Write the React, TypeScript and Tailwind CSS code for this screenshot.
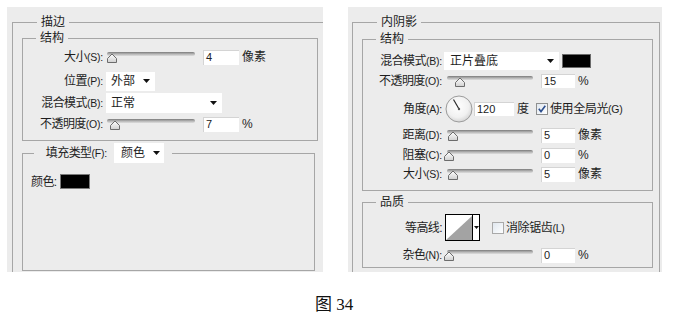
import React from "react";

const FONT = "font-['Liberation_Sans','Noto_Sans_CJK_SC',sans-serif]";

function Arrow() {
  return (
    <svg width="7" height="4" className="block shrink-0">
      <path d="M0 0 H7 L3.5 4 Z" fill="#111" />
    </svg>
  );
}

function Slider({ w, track, thumb }: { w: number; track: number; thumb: number }) {
  return (
    <svg width={w} height={12} className="block shrink-0">
      <defs>
        <linearGradient id="trk" x1="0" y1="0" x2="0" y2="1">
          <stop offset="0" stopColor="#7a7a7a" />
          <stop offset="0.5" stopColor="#b4b4b4" />
          <stop offset="1" stopColor="#dedede" />
        </linearGradient>
        <linearGradient id="thb" x1="0" y1="0" x2="0" y2="1">
          <stop offset="0" stopColor="#ffffff" />
          <stop offset="1" stopColor="#d0d0d0" />
        </linearGradient>
      </defs>
      <rect x={track} y={1} width={w - track} height={4} rx={2} fill="url(#trk)" />
      <path
        d={`M${thumb + 0.5} 11.5 V7.5 L${thumb + 5} 3 L${thumb + 9.5} 7.5 V11.5 Z`}
        fill="url(#thb)"
        stroke="#6c6c6c"
        strokeWidth="1"
        strokeLinejoin="round"
      />
    </svg>
  );
}

function Input({ v, w, h = 15 }: { v: string; w: number; h?: number }) {
  return (
    <div
      className="bg-white border-t border-l border-[#d4d4d4] pl-[2px] flex items-center text-[11px] text-[#222] shrink-0"
      style={{ width: w, height: h }}
    >
      {v}
    </div>
  );
}

function Select({ v, w, h, pl = 5, pr = 5 }: { v: string; w: number; h: number; pl?: number; pr?: number }) {
  return (
    <div
      className="bg-white flex items-center justify-between text-[12px] text-[#1e1e1e] shrink-0"
      style={{ width: w, height: h, paddingLeft: pl, paddingRight: pr }}
    >
      <span>{v}</span>
      <Arrow />
    </div>
  );
}

function Check({ checked }: { checked: boolean }) {
  return (
    <svg width="12" height="12" className="block shrink-0">
      <defs>
        <linearGradient id="cbg" x1="0" y1="0" x2="1" y2="1">
          <stop offset="0" stopColor="#dfe6ee" />
          <stop offset="1" stopColor="#ffffff" />
        </linearGradient>
      </defs>
      <rect x="0.5" y="0.5" width="11" height="11" fill="url(#cbg)" stroke={checked ? "#8e8f8f" : "#a9a9a9"} />
      {checked && <path d="M2.8 5.8 L5 8.6 L9.3 2.8" fill="none" stroke="#2d4f8e" strokeWidth="1.6" />}
    </svg>
  );
}

function Dial() {
  return (
    <svg width="28" height="28" className="block shrink-0">
      <defs>
        <radialGradient id="dial" cx="0.45" cy="0.4" r="0.6">
          <stop offset="0" stopColor="#ffffff" />
          <stop offset="0.7" stopColor="#f1f1f1" />
          <stop offset="1" stopColor="#d6d6d6" />
        </radialGradient>
      </defs>
      <circle cx="14" cy="14" r="13" fill="url(#dial)" stroke="#9c9c9c" />
      <line x1="14" y1="14" x2="8.5" y2="4.5" stroke="#2a2a2a" strokeWidth="1.2" />
      <circle cx="14" cy="14" r="1.2" fill="#555" />
    </svg>
  );
}

function Contour() {
  return (
    <div className="flex h-[27px] w-[35px] border border-black bg-white shrink-0">
      <svg width="27" height="25" className="block">
        <path d="M0 25 L27 0 L27 25 Z" fill="#a3a3a3" />
      </svg>
      <div className="w-[7px] border-l border-black flex items-center justify-center">
        <svg width="5" height="3" className="block">
          <path d="M0 0 H5 L2.5 3 Z" fill="#111" />
        </svg>
      </div>
    </div>
  );
}

function Txt({ t }: { t: string }) {
  const m = t.match(/^(.*?)(\(.*)$/);
  if (!m) return <>{t}</>;
  return (
    <>
      {m[1]}
      <span className="text-[10.5px] tracking-[-0.2px]">{m[2]}</span>
    </>
  );
}

function Label({ t, w }: { t: string; w: number }) {
  return (
    <div className="text-right text-[12px] text-[#1e1e1e] shrink-0 whitespace-nowrap tracking-[-0.6px]" style={{ width: w }}>
      <Txt t={t} />
    </div>
  );
}

function Legend({ children, ml }: { children: React.ReactNode; ml: number }) {
  return (
    <legend className="px-1 text-[12px] leading-[16px] text-[#1e1e1e]" style={{ marginLeft: ml }}>
      {children}
    </legend>
  );
}

function Unit({ children }: { children: React.ReactNode }) {
  return <span className="ml-[3px] text-[12px] text-[#1e1e1e]">{children}</span>;
}

export default function App() {
  return (
    <div className={`w-[684px] h-[320px] bg-white ${FONT}`}>
      <div className="flex gap-[25px] pl-[7px] pt-[7px]">
        {/* Left panel: 描边 */}
        <div className="w-[316px] h-[265px] bg-[#ececec] pl-[5px] pt-[7px] overflow-hidden">
          <fieldset className="h-[258px] border-t border-l border-[#a6a6a6] pl-[9px]">
            <Legend ml={15}>描边</Legend>
            <fieldset className="w-[296px] border border-[#a6a6a6] pb-[6px]">
              <Legend ml={13}>结构</Legend>
              <div className="flex items-center h-[20px] mt-[1px]">
                <Label w={80} t="大小(S):" />
                <div className="ml-[2px]"><Slider w={90} track={2} thumb={2} /></div>
                <div className="ml-[8px]"><Input v="4" w={36} /></div>
                <Unit>像素</Unit>
              </div>
              <div className="flex items-center h-[20px] mt-[4px]">
                <Label w={80} t="位置(P):" />
                <div className="ml-[3px]"><Select v="外部" w={49} h={19} /></div>
              </div>
              <div className="flex items-center h-[20px] mt-[2px]">
                <Label w={80} t="混合模式(B):" />
                <div className="ml-[3px]"><Select v="正常" w={116} h={20} /></div>
              </div>
              <div className="flex items-center h-[20px] mt-[1px]">
                <Label w={80} t="不透明度(O):" />
                <div className="ml-[2px]"><Slider w={90} track={2} thumb={5} /></div>
                <div className="ml-[8px]"><Input v="7" w={36} /></div>
                <Unit>%</Unit>
              </div>
            </fieldset>
            <fieldset className="w-[293px] h-[128px] mt-[2px] border border-[#a6a6a6]">
              <legend className="flex items-center pr-[8px]" style={{ marginLeft: 11 }}>
                <Label w={73} t="填充类型(F):" />
                <div className="ml-[7px]"><Select v="颜色" w={50} h={20} pl={7} pr={4} /></div>
              </legend>
              <div className="flex items-center h-[15px] mt-[11px] pl-[8px]">
                <span className="text-[12px] text-[#1e1e1e] tracking-[-0.6px]">颜色:</span>
                <div className="ml-[3px] w-[30px] h-[15px] bg-black border border-[#7a7a7a]" />
              </div>
            </fieldset>
          </fieldset>
        </div>

        {/* Right panel: 内阴影 */}
        <div className="w-[314px] h-[265px] bg-[#ececec] pl-[4px] pt-[7px] overflow-hidden">
          <fieldset className="w-[308px] h-[258px] border-t border-l border-r border-[#a6a6a6] pl-[9px]">
            <Legend ml={15}>内阴影</Legend>
            <fieldset className="w-[291px] mt-[1px] border border-[#a6a6a6] pb-[8px]">
              <Legend ml={13}>结构</Legend>
              <div className="flex items-center h-[18px] mt-[5px]">
                <Label w={79} t="混合模式(B):" />
                <div className="ml-[2px]"><Select v="正片叠底" w={115} h={18} pl={6} pr={5} /></div>
                <div className="ml-[3px] w-[29px] h-[14px] bg-black border border-[#6a6a6a]" />
              </div>
              <div className="flex items-center h-[16px] mt-[3px]">
                <Label w={79} t="不透明度(O):" />
                <div className="ml-[2px]"><Slider w={89} track={3} thumb={11} /></div>
                <div className="ml-[8px]"><Input v="15" w={34} h={14} /></div>
                <Unit>%</Unit>
              </div>
              <div className="flex items-center h-[28px] mt-[6px]">
                <Label w={79} t="角度(A):" />
                <div className="ml-[3px]"><Dial /></div>
                <div className="ml-[1px]"><Input v="120" w={40} h={14} /></div>
                <Unit>度</Unit>
                <div className="ml-[7px]"><Check checked /></div>
                <span className="ml-[2px] text-[12px] text-[#1e1e1e] tracking-[-0.4px]"><Txt t="使用全局光(G)" /></span>
              </div>
              <div className="flex items-center h-[16px] mt-[4px]">
                <Label w={79} t="距离(D):" />
                <div className="ml-[2px]"><Slider w={89} track={3} thumb={4} /></div>
                <div className="ml-[8px]"><Input v="5" w={34} h={15} /></div>
                <Unit>像素</Unit>
              </div>
              <div className="flex items-center h-[16px] mt-[4px]">
                <Label w={79} t="阻塞(C):" />
                <div className="ml-[2px]"><Slider w={89} track={3} thumb={0} /></div>
                <div className="ml-[8px]"><Input v="0" w={34} h={15} /></div>
                <Unit>%</Unit>
              </div>
              <div className="flex items-center h-[16px] mt-[3px]">
                <Label w={79} t="大小(S):" />
                <div className="ml-[2px]"><Slider w={89} track={3} thumb={4} /></div>
                <div className="ml-[8px]"><Input v="5" w={34} h={15} /></div>
                <Unit>像素</Unit>
              </div>
            </fieldset>
            <fieldset className="w-[291px] mt-[3px] border border-[#a6a6a6] pb-[4px]">
              <Legend ml={13}>品质</Legend>
              <div className="flex items-center h-[27px] mt-[4px]">
                <Label w={79} t="等高线:" />
                <div className="ml-[3px]"><Contour /></div>
                <div className="ml-[12px]"><Check checked={false} /></div>
                <span className="ml-[2px] text-[12px] text-[#1e1e1e] tracking-[-0.4px]"><Txt t="消除锯齿(L)" /></span>
              </div>
              <div className="flex items-center h-[16px] mt-[6px]">
                <Label w={79} t="杂色(N):" />
                <div className="ml-[2px]"><Slider w={89} track={3} thumb={0} /></div>
                <div className="ml-[8px]"><Input v="0" w={34} h={15} /></div>
                <Unit>%</Unit>
              </div>
            </fieldset>
          </fieldset>
        </div>
      </div>
      <div className="mt-[23px] pl-[315px] text-[17px] leading-[20px] text-[#111] font-['Liberation_Serif','Noto_Sans_CJK_SC',serif]">
        图 34
      </div>
    </div>
  );
}
